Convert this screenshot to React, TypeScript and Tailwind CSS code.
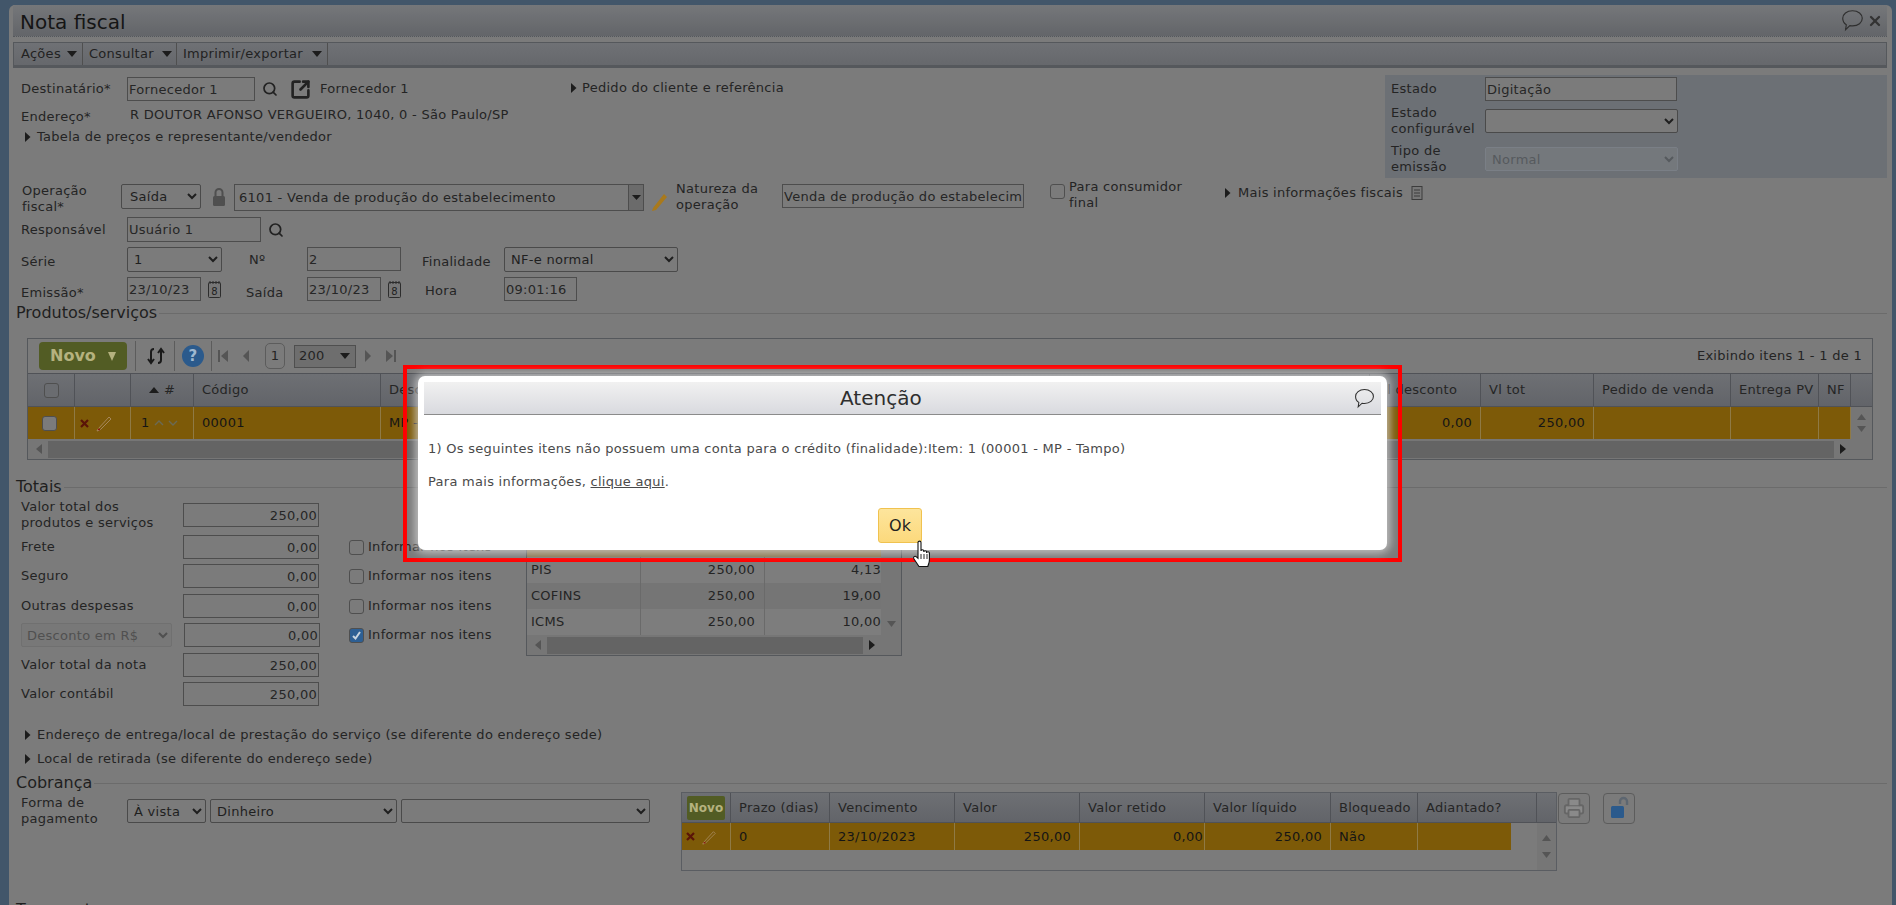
import { Printer, Search, SquareArrowOutUpRight, X } from "lucide-react";

const inputBase =
  "h-[24px] border border-[#4d4d4d] bg-[#7b7b7b] px-[1px] text-[13px] text-[#262626] outline-none";

function Triangle({ className = "" }: { className?: string }) {
  return (
    <svg width="6" height="10" viewBox="0 0 6 10" className={`shrink-0 ${className}`}>
      <path d="M0 0 L5.5 5 L0 10 Z" fill="#1c1c1c" />
    </svg>
  );
}

function Field({ value, className = "" }: { value: string; className?: string }) {
  return <input readOnly value={value} className={`${inputBase} shrink-0 ${className}`} />;
}

function Amount({ value, tone = "text-[#262626]" }: { value: string; tone?: string }) {
  return <input readOnly value={value} className={`${inputBase} w-[136px] shrink-0 text-right ${tone}`} />;
}

function Pick({ value, className = "" }: { value: string; className?: string }) {
  return (
    <select
      value={value}
      onChange={() => {}}
      className={`shrink-0 rounded-[2px] border border-[#4a4a4a] bg-[#7b7b7b] px-[2px] text-[13px] text-[#1f1f1f] outline-none ${className}`}
    >
      <option value={value}>{value}</option>
    </select>
  );
}

function Calendar() {
  return (
    <svg width="16" height="19" viewBox="0 0 16 19" className="shrink-0">
      <rect x="1.5" y="2.5" width="12" height="15" rx="1" fill="#777" stroke="#2d2d2d" />
      <path d="M3 1v3M6 1v3M9 1v3M12 1v3" stroke="#2d2d2d" />
      <text x="7.5" y="14.5" textAnchor="middle" fontSize="10" fill="#222" fontFamily="DejaVu Sans">
        8
      </text>
    </svg>
  );
}

function Magnifier() {
  return <Search size={16} strokeWidth={2.6} className="shrink-0 text-[#222]" />;
}

function Bubble({ size = 20 }: { size?: number }) {
  return (
    <svg width={size} height={size} viewBox="0 0 20 20" className="shrink-0">
      <path
        d="M10 1.5c5 0 8.5 2.9 8.5 6.6s-3.5 6.6-8.5 6.6c-.8 0-1.6-.1-2.3-.2L4 18l.6-4.3C2.600 12.500 1.500 10.500 1.500 8.100 1.500 4.400 5 1.500 10 1.500Z"
        fill="none"
        stroke="#2f2f2f"
        strokeWidth="1"
      />
    </svg>
  );
}

function RowTools({ small = false }: { small?: boolean }) {
  return (
    <span className="flex items-center gap-[6px]">
      <svg width="9" height="9" viewBox="0 0 9 9">
        <path d="M1 1 L8 8 M8 1 L1 8" stroke="#5a1408" strokeWidth="2.2" />
      </svg>
      <svg width={small ? 16 : 18} height="18" viewBox="0 0 18 18">
        <path d="M3 15 L14 3 L16 5 L5 16 L2 17 Z" fill="none" stroke="#a5875a" strokeWidth="1" />
        <path d="M3 15 L5 16" stroke="#8a1a10" strokeWidth="1.5" />
      </svg>
    </span>
  );
}

function HeadCell({ label, className = "" }: { label: string; className?: string }) {
  return (
    <div className={`flex h-full shrink-0 items-center border-r border-[#505257] px-[8px] whitespace-nowrap ${className}`}>
      {label}
    </div>
  );
}

function RowCell({ label = "", className = "", right = false }: { label?: string; className?: string; right?: boolean }) {
  return (
    <div
      className={`flex h-full shrink-0 items-center border-r border-[#8f7a45] px-[8px] whitespace-nowrap ${right ? "justify-end" : ""} ${className}`}
    >
      {label}
    </div>
  );
}

function Check({ checked = false, tone = "bg-[#7b7b7b]" }: { checked?: boolean; tone?: string }) {
  return (
    <span
      className={`flex h-[15px] w-[15px] shrink-0 items-center justify-center rounded-[3px] border border-[#4f4f4f] ${checked ? "bg-[#2d5f94]" : tone}`}
    >
      {checked && (
        <svg width="11" height="11" viewBox="0 0 11 11">
          <path d="M2 6l2.500 2.500L9 2" fill="none" stroke="#c8d4e0" strokeWidth="2" />
        </svg>
      )}
    </span>
  );
}

function Legend({ title, className = "" }: { title: string; className?: string }) {
  return (
    <div className={`flex h-[18px] items-center pl-[3px] ${className}`}>
      <span className="text-[16px] leading-[18px] tracking-normal text-[#1f1f1f]">{title}</span>
      <span className="ml-[2px] h-px flex-1 bg-[#6b6b6b]" />
    </div>
  );
}

function TotalRow({
  label,
  value,
  tone,
  mark,
  className = "",
}: {
  label: React.ReactNode;
  value: string;
  tone?: string;
  mark?: "on" | "off";
  className?: string;
}) {
  return (
    <div className={`flex h-[24px] items-center ${className}`}>
      <span className="w-[162px] shrink-0 leading-[16px]">{label}</span>
      <Amount value={value} tone={tone} />
      {mark && (
        <span className="ml-[30px] flex items-center gap-[4px] whitespace-nowrap">
          <Check checked={mark === "on"} />
          Informar nos itens
        </span>
      )}
    </div>
  );
}

function NovoButton() {
  return (
    <div className="flex h-[28px] w-[88px] items-center justify-between rounded-[4px] bg-[#525c24] px-[11px] text-[16px] font-bold tracking-normal text-[#b5b27f]">
      Novo
      <svg width="8" height="9" viewBox="0 0 8 9">
        <path d="M0 0 H8 L4 9 Z" fill="#b5b27f" />
      </svg>
    </div>
  );
}

function TaxRow({ name, base, value, tone }: { name: string; base: string; value: string; tone: string }) {
  return (
    <div className={`flex h-[26px] ${tone}`}>
      <div className="flex w-[114px] items-center border-r border-[#6a6a6a] px-[4px]">{name}</div>
      <div className="flex w-[124px] items-center justify-end border-r border-[#6a6a6a] px-[9px]">{base}</div>
      <div className="flex w-[116px] items-center justify-end">{value}</div>
    </div>
  );
}

function HandCursor() {
  return (
    <svg width="22" height="30" viewBox="0 0 22 30" className="absolute top-[171px] left-[505px]">
      <path
        d="M6 2.500c0-1.800 3-1.800 3 0V11c0-1.600 2.800-1.600 2.800 0v1c0-1.600 2.800-1.600 2.800 0v1c0-1.600 2.800-1.600 2.800 0v7c0 3-1 4-1.600 6.500H7L2 19c-1.400-2 .8-3.600 2.400-2.200L6 18.200Z"
        fill="#fff"
        stroke="#111"
        strokeWidth="1.1"
      />
      <path d="M9 14v5M12 14v5M15 14v5" stroke="#111" strokeWidth="0.9" />
    </svg>
  );
}

export default function App() {
  return (
    <div className="relative flex h-[905px] w-[1896px] overflow-hidden bg-[#42566a] pt-[5px] pr-[5px] pl-[9px] font-['DejaVu_Sans',sans-serif] text-[13px] leading-[18px] tracking-[0.28px] text-[#242424]">
      <div className="h-[1000px] flex-1 rounded-t-[6px] bg-[#7b7b7b] pr-[5px] pl-[4px]">
        <div className="flex h-[32px] items-center justify-between border-b border-dotted border-[#55585c] bg-linear-to-b from-[#75777a] to-[#636569] pr-[2px] pl-[7px]">
          <span className="pt-[3px] text-[20px] tracking-normal text-[#151515]">Nota fiscal</span>
          <span className="flex items-center gap-[3px] pr-[2px] text-[#333]">
            <Bubble size={23} />
            <X size={16} strokeWidth={3.4} />
          </span>
        </div>

        <div className="mt-[5px] flex h-[26px] items-stretch border-t border-r border-b-[3px] border-l border-[#55585c] border-b-[#55585c] bg-linear-to-b from-[#6f7175] to-[#66686c] text-[#222]">
          <div className="flex w-[69px] items-center justify-between border-r border-[#4f4f4f] pr-[5px] pl-[7px]">
            Ações
            <svg width="10" height="6" viewBox="0 0 10 6"><path d="M0 0H10L5 6Z" fill="#1c1c1c" /></svg>
          </div>
          <div className="flex w-[94px] items-center justify-between border-r border-[#4f4f4f] pr-[4px] pl-[6px]">
            Consultar
            <svg width="10" height="6" viewBox="0 0 10 6"><path d="M0 0H10L5 6Z" fill="#1c1c1c" /></svg>
          </div>
          <div className="flex w-[151px] items-center justify-between border-r border-[#4f4f4f] pr-[5px] pl-[6px]">
            Imprimir/exportar
            <svg width="10" height="6" viewBox="0 0 10 6"><path d="M0 0H10L5 6Z" fill="#1c1c1c" /></svg>
          </div>
        </div>

        <div className="flex h-[110px] pt-[7px]">
          <div className="w-[1372px] shrink-0 pt-[2px] pl-[8px]">
            <div className="flex h-[24px] items-center">
              <span className="w-[106px] shrink-0">Destinatário*</span>
              <Field value="Fornecedor 1" className="w-[128px]" />
              <span className="ml-[7px]"><Magnifier /></span>
              <SquareArrowOutUpRight size={21} strokeWidth={3} className="ml-[12px] text-[#222]" />
              <span className="ml-[9px] w-[251px] shrink-0">Fornecedor 1</span>
              <Triangle className="mb-[2px]" />
              <span className="mb-[3px] ml-[5px]">Pedido do cliente e referência</span>
            </div>
            <div className="mt-[6px] flex h-[16px] items-center">
              <span className="mt-[3px] w-[109px] shrink-0">Endereço*</span>
              <span>R DOUTOR AFONSO VERGUEIRO, 1040, 0 - São Paulo/SP</span>
            </div>
            <div className="mt-[6px] flex h-[16px] items-center pl-[4px]">
              <Triangle />
              <span className="ml-[6px]">Tabela de preços e representante/vendedor</span>
            </div>
          </div>
          <div className="h-[103px] flex-1 bg-[#6c7075] pt-[2px] pl-[6px]">
            <div className="flex h-[24px] items-center">
              <span className="w-[94px] shrink-0">Estado</span>
              <Field value="Digitação" className="w-[192px] text-[#33291f]" />
            </div>
            <div className="mt-[8px] flex h-[24px] items-center">
              <span className="w-[94px] shrink-0 leading-[16px]">Estado<br />configurável</span>
              <Pick value="" className="h-[24px] w-[193px]" />
            </div>
            <div className="mt-[14px] flex h-[24px] items-center">
              <span className="w-[94px] shrink-0 leading-[16px]">Tipo de<br />emissão</span>
              <select
                value="Normal"
                onChange={() => {}}
                className="h-[24px] w-[193px] rounded-[2px] border border-[#7a7f86] bg-[#74787c] px-[2px] text-[13px] text-[#565a5e] outline-none"
              >
                <option>Normal</option>
              </select>
            </div>
          </div>
        </div>

        <div className="mt-[6px] flex h-[27px] items-start pl-[9px]">
          <span className="mt-[-1px] w-[99px] shrink-0 leading-[16px]">Operação<br />fiscal*</span>
          <Pick value="Saída" className="h-[25px] w-[80px] border-[#3f4f3f] pl-[4px]" />
          <svg width="14" height="20" viewBox="0 0 14 20" className="mt-[3px] ml-[11px] shrink-0">
            <path d="M3.500 9V5.500a3.500 3.500 0 0 1 7 0V9" fill="none" stroke="#4f4f4f" strokeWidth="2" />
            <rect x="1" y="9" width="12" height="10" rx="1.500" fill="#4f4f4f" />
          </svg>
          <div className="ml-[8px] flex h-[27px] w-[410px] shrink-0 items-stretch border border-[#4d4d4d]">
            <span className="flex flex-1 items-center pl-[4px]">6101 - Venda de produção do estabelecimento</span>
            <span className="flex w-[15px] items-center justify-center border-l border-[#4d4d4d] bg-[#6b6b6b]">
              <svg width="9" height="5" viewBox="0 0 9 5"><path d="M0 0H9L4.500 5Z" fill="#1c1c1c" /></svg>
            </span>
          </div>
          <svg width="18" height="20" viewBox="0 0 18 20" className="mt-[7px] ml-[7px] shrink-0">
            <path d="M2 17 L13 3 L16 6 L5 19 L1 20 Z" fill="#a9791b" />
          </svg>
          <span className="mt-[-3px] ml-[7px] w-[106px] shrink-0 leading-[16px]">Natureza da<br />operação</span>
          <Field value="Venda de produção do estabelecimento" className="w-[242px]" />
          <span className="ml-[26px]"><Check /></span>
          <span className="mt-[-5px] ml-[4px] w-[155px] shrink-0 leading-[16px]">Para consumidor<br />final</span>
          <span className="flex items-center">
            <Triangle className="mx-[1px]" />
            <span className="ml-[6px] whitespace-nowrap">Mais informações fiscais</span>
            <svg width="12" height="14" viewBox="0 0 12 14" className="ml-[8px]">
              <rect x="1" y="0.5" width="10" height="13" fill="#777" stroke="#3c3c3c" />
              <path d="M3 4h6M3 7h6M3 10h6" stroke="#3c3c3c" />
            </svg>
          </span>
        </div>

        <div className="mt-[6px] flex h-[25px] items-center pl-[8px]">
          <span className="w-[106px] shrink-0">Responsável</span>
          <Field value="Usuário 1" className="h-[25px] w-[134px]" />
          <span className="ml-[7px]"><Magnifier /></span>
        </div>

        <div className="mt-[5px] flex h-[25px] items-start pl-[8px]">
          <span className="mt-[6px] w-[106px] shrink-0">Série</span>
          <Pick value="1" className="h-[25px] w-[95px]" />
          <span className="mt-[4px] ml-[27px] w-[58px] shrink-0">Nº</span>
          <Field value="2" className="w-[94px]" />
          <span className="mt-[6px] ml-[21px] w-[82px] shrink-0">Finalidade</span>
          <Pick value="NF-e normal" className="h-[25px] w-[174px]" />
        </div>

        <div className="mt-[5px] flex h-[24px] items-start pl-[8px]">
          <span className="mt-[7px] w-[106px] shrink-0">Emissão*</span>
          <Field value="23/10/23" className="w-[74px]" />
          <span className="mt-[3px] ml-[6px]"><Calendar /></span>
          <span className="mt-[7px] ml-[23px] w-[61px] shrink-0">Saída</span>
          <Field value="23/10/23" className="w-[74px]" />
          <span className="mt-[3px] ml-[6px]"><Calendar /></span>
          <span className="mt-[5px] ml-[22px] w-[79px] shrink-0">Hora</span>
          <Field value="09:01:16" className="w-[73px]" />
        </div>

        <Legend title="Produtos/serviços" className="mt-[3px]" />

        <div className="mt-[16px] mr-[14px] ml-[14px] flex h-[122px] flex-col border border-[#55585c]">
          <div className="flex h-[34px] items-center pl-[11px]">
            <NovoButton />
            <span className="ml-[8px] h-[30px] w-px bg-[#5c5c5c]" />
            <svg width="18" height="18" viewBox="0 0 18 18" className="ml-[11px]">
              <path d="M4 15V5c0-2 1-3 3-3M1 12l3 4 3-4M14 3v10c0 2-1 3-3 3M11 6l3-4 3 4" fill="none" stroke="#1a1a1a" strokeWidth="2" />
            </svg>
            <span className="ml-[9px] h-[30px] w-px bg-[#5c5c5c]" />
            <span className="ml-[7px] flex h-[22px] w-[22px] items-center justify-center rounded-full bg-[#2b5a8c] text-[15px] font-bold text-[#9fb8d0]">?</span>
            <span className="ml-[7px] h-[30px] w-px bg-[#5c5c5c]" />
            <span className="ml-[6px] flex items-center gap-[15px] text-[#4a4a4a]">
              <svg width="10" height="12" viewBox="0 0 10 12"><path d="M0 0h2v12H0zM10 0v12L3 6Z" fill="#555" /></svg>
              <svg width="6" height="12" viewBox="0 0 6 12"><path d="M6 0v12L0 6Z" fill="#555" /></svg>
            </span>
            <span className="ml-[16px] flex h-[26px] w-[20px] items-center justify-center rounded-[5px] border border-[#5c5c5c]">1</span>
            <span className="ml-[9px] flex h-[23px] w-[62px] items-center justify-between border border-[#4f4f4f] bg-[#6e6e6e] pr-[5px] pl-[4px]">
              200
              <svg width="10" height="6" viewBox="0 0 10 6"><path d="M0 0H10L5 6Z" fill="#1c1c1c" /></svg>
            </span>
            <span className="ml-[9px] flex items-center gap-[15px]">
              <svg width="6" height="12" viewBox="0 0 6 12"><path d="M0 0v12L6 6Z" fill="#555" /></svg>
              <svg width="10" height="12" viewBox="0 0 10 12"><path d="M8 0h2v12H8zM0 0v12L7 6Z" fill="#555" /></svg>
            </span>
            <span className="mr-[10px] ml-auto">Exibindo itens 1 - 1 de 1</span>
          </div>
          <div className="flex h-[34px] border-t border-b border-[#505257] bg-linear-to-b from-[#6e7074] to-[#626469] text-[#252525]">
            <div className="flex h-full w-[47px] shrink-0 items-center justify-center border-r border-[#505257]">
              <Check tone="bg-[#6a6c70]" />
            </div>
            <HeadCell label="" className="w-[56px]" />
            <div className="flex h-full w-[63px] shrink-0 items-center justify-center gap-[5px] border-r border-[#505257]">
              <svg width="10" height="6" viewBox="0 0 10 6"><path d="M0 6H10L5 0Z" fill="#1c1c1c" /></svg>
              #
            </div>
            <HeadCell label="Código" className="w-[187px]" />
            <HeadCell label="Descrição" className="w-[989px]" />
            <HeadCell label="Vl desconto" className="w-[111px]" />
            <HeadCell label="Vl tot" className="w-[113px]" />
            <HeadCell label="Pedido de venda" className="w-[137px]" />
            <HeadCell label="Entrega PV" className="w-[88px]" />
            <HeadCell label="NF" className="w-[32px]" />
          </div>
          <div className="flex h-[32px]">
            <div className="flex h-full flex-1 bg-[#7d5a08] text-[#151515]">
              <div className="flex h-full w-[47px] shrink-0 items-center justify-center border-r border-[#8f7a45] pr-[4px]">
                <Check tone="bg-[#7b7b7b]" />
              </div>
              <div className="flex h-full w-[56px] shrink-0 items-center border-r border-[#8f7a45] pl-[5px]"><RowTools /></div>
              <div className="flex h-full w-[63px] shrink-0 items-center gap-[4px] border-r border-[#8f7a45] pl-[10px]">
                1
                <svg width="24" height="8" viewBox="0 0 24 8"><path d="M1 6l4-4 4 4M15 2l4 4 4-4" fill="none" stroke="#6a6a55" strokeWidth="1.4" /></svg>
              </div>
              <RowCell label="00001" className="w-[187px]" />
              <RowCell label="MP - Tampo" className="w-[989px]" />
              <RowCell label="0,00" right className="w-[111px]" />
              <RowCell label="250,00" right className="w-[113px]" />
              <RowCell className="w-[137px]" />
              <RowCell className="w-[88px]" />
              <RowCell className="w-[32px]" />
            </div>
            <div className="flex w-[21px] shrink-0 flex-col items-center justify-center gap-[6px] bg-[#767676]">
              <svg width="9" height="6" viewBox="0 0 9 6"><path d="M0 6H9L4.500 0Z" fill="#555" /></svg>
              <svg width="9" height="6" viewBox="0 0 9 6"><path d="M0 0H9L4.500 6Z" fill="#555" /></svg>
            </div>
          </div>
          <div className="flex flex-1 items-center bg-[#767676] pr-[26px] pl-[8px]">
            <svg width="6" height="10" viewBox="0 0 6 10"><path d="M6 0v10L0 5Z" fill="#555" /></svg>
            <span className="ml-[6px] h-[17px] flex-1 bg-[#646464]" />
            <svg width="6" height="10" viewBox="0 0 6 10" className="ml-[6px]"><path d="M0 0v10L6 5Z" fill="#1c1c1c" /></svg>
          </div>
        </div>

        <Legend title="Totais" className="mt-[18px]" />

        <div className="flex pl-[8px]">
          <div className="w-[505px] shrink-0 pt-[7px]">
            <TotalRow label={<>Valor total dos<br />produtos e serviços</>} value="250,00" tone="text-[#3d4a26]" />
            <TotalRow label="Frete" value="0,00" mark="off" className="mt-[8px]" />
            <TotalRow label="Seguro" value="0,00" mark="off" className="mt-[5px]" />
            <TotalRow label="Outras despesas" value="0,00" mark="off" className="mt-[6px]" />
            <div className="mt-[5px] flex h-[24px] items-center">
              <select
                value="Desconto em R$"
                onChange={() => {}}
                className="h-[24px] w-[151px] shrink-0 rounded-[2px] border border-[#707070] bg-[#787878] px-[1px] text-[13px] text-[#505050] outline-none"
              >
                <option>Desconto em R$</option>
              </select>
              <span className="ml-[12px]"><Amount value="0,00" /></span>
              <span className="ml-[29px] flex items-center gap-[4px] whitespace-nowrap">
                <Check checked />
                Informar nos itens
              </span>
            </div>
            <TotalRow label="Valor total da nota" value="250,00" tone="text-[#3d4a26]" className="mt-[6px]" />
            <TotalRow label="Valor contábil" value="250,00" tone="text-[#3d4a26]" className="mt-[5px]" />
          </div>
          <div className="mt-[6px] h-[154px] w-[376px] shrink-0 border border-t-0 border-[#55585c]">
            <div className="h-[28px] bg-[#686a6e]" />
            <div className="h-[27px] w-[354px] bg-[#8a7850]" />
            <div className="flex h-[78px]">
              <div className="w-[354px]">
                <TaxRow name="PIS" base="250,00" value="4,13" tone="bg-[#7d7d7d]" />
                <TaxRow name="COFINS" base="250,00" value="19,00" tone="bg-[#757575]" />
                <TaxRow name="ICMS" base="250,00" value="10,00" tone="bg-[#7d7d7d]" />
              </div>
              <div className="flex flex-1 items-end justify-center bg-[#767676] pb-[8px]">
                <svg width="9" height="6" viewBox="0 0 9 6"><path d="M0 0H9L4.500 6Z" fill="#555" /></svg>
              </div>
            </div>
            <div className="flex h-[20px] items-center bg-[#767676] pr-[26px] pl-[8px]">
              <svg width="6" height="10" viewBox="0 0 6 10"><path d="M6 0v10L0 5Z" fill="#555" /></svg>
              <span className="ml-[6px] h-[17px] flex-1 bg-[#646464]" />
              <svg width="6" height="10" viewBox="0 0 6 10" className="ml-[6px]"><path d="M0 0v10L6 5Z" fill="#1c1c1c" /></svg>
            </div>
          </div>
        </div>

        <div className="mt-[21px] flex h-[16px] items-center gap-[6px] pl-[12px]">
          <Triangle />
          Endereço de entrega/local de prestação do serviço (se diferente do endereço sede)
        </div>
        <div className="mt-[8px] flex h-[16px] items-center gap-[6px] pl-[12px]">
          <Triangle />
          Local de retirada (se diferente do endereço sede)
        </div>

        <Legend title="Cobrança" className="mt-[7px]" />

        <div className="flex h-[80px] pl-[8px]">
          <div className="mt-[7px] flex h-[24px] w-[660px] shrink-0 items-center gap-[4px] self-start">
            <span className="w-[102px] shrink-0 leading-[16px]">Forma de<br />pagamento</span>
            <Pick value="À vista" className="h-[24px] w-[79px]" />
            <Pick value="Dinheiro" className="h-[24px] w-[187px]" />
            <Pick value="" className="h-[24px] w-[249px]" />
          </div>
          <div className="h-[79px] w-[876px] shrink-0 border border-[#5a5d62]">
            <div className="flex h-[30px] border-b border-[#505257] bg-linear-to-b from-[#6e7074] to-[#626469] text-[#252525]">
              <div className="flex h-full w-[49px] shrink-0 items-center justify-center border-r border-[#505257]">
                <span className="flex h-[24px] w-[38px] items-center justify-center rounded-[2px] bg-[#525c24] text-[12px] font-bold tracking-normal text-[#b5b27f]">Novo</span>
              </div>
              <HeadCell label="Prazo (dias)" className="w-[99px]" />
              <HeadCell label="Vencimento" className="w-[125px]" />
              <HeadCell label="Valor" className="w-[125px]" />
              <HeadCell label="Valor retido" className="w-[125px]" />
              <HeadCell label="Valor líquido" className="w-[126px]" />
              <HeadCell label="Bloqueado" className="w-[87px]" />
              <HeadCell label="Adiantado?" className="w-[119px]" />
            </div>
            <div className="flex h-[47px]">
              <div className="h-[27px] w-[829px] shrink-0">
                <div className="flex h-full bg-[#7d5a08] text-[#151515]">
                  <div className="flex h-full w-[49px] shrink-0 items-center border-r border-[#8f7a45] pl-[4px]"><RowTools small /></div>
                  <RowCell label="0" className="w-[99px]" />
                  <RowCell label="23/10/2023" className="w-[125px]" />
                  <RowCell label="250,00" right className="w-[125px]" />
                  <RowCell label="0,00" right className="w-[125px] pr-[1px]" />
                  <RowCell label="250,00" right className="w-[126px]" />
                  <RowCell label="Não" className="w-[87px]" />
                  <RowCell className="w-[93px] border-r-0" />
                </div>
              </div>
              <div className="ml-[26px] flex flex-1 flex-col items-center justify-around bg-[#767676] py-[6px]">
                <svg width="9" height="6" viewBox="0 0 9 6"><path d="M0 6H9L4.500 0Z" fill="#555" /></svg>
                <svg width="9" height="6" viewBox="0 0 9 6"><path d="M0 0H9L4.500 6Z" fill="#555" /></svg>
              </div>
            </div>
          </div>
          <div className="flex h-[32px] items-center self-start">
            <span className="ml-[1px] flex h-[31px] w-[32px] items-center justify-center rounded-[4px] border border-[#5c5c5c]">
              <Printer size={22} fill="#8a8a8a" className="text-[#666]" />
            </span>
            <span className="ml-[13px] flex h-[31px] w-[32px] items-center justify-center rounded-[4px] border border-[#5c5c5c]">
              <svg width="20" height="24" viewBox="0 0 20 24">
                <path d="M11 8V5.500a3.500 3.500 0 0 1 7 0V9" fill="none" stroke="#5d6670" strokeWidth="2.400" />
                <rect x="2" y="10" width="13" height="12" rx="1.500" fill="#2b5a8c" />
              </svg>
            </span>
          </div>
        </div>

        <Legend title="Transporte" className="mt-[29px]" />
      </div>

      <div className="absolute top-[365px] left-[403px] h-[197px] w-[999px] border-4 border-[#ff0000] pt-[7px] pl-[11px]">
        <div className="h-[174px] w-[969px] rounded-[7px] bg-white px-[6px] pt-[6px] text-[#4a4a4a] shadow-[0_0_9px_3px_rgba(215,215,215,0.75)]">
          <div className="flex h-[33px] items-center justify-between border-b border-[#8b8b8b] bg-linear-to-b from-[#f1f1f1] to-[#d9dadf] pr-[6px]">
            <span className="ml-[416px] text-[20px] tracking-normal text-[#2e2e2e]">Atenção</span>
            <Bubble size={21} />
          </div>
          <p className="mt-[25px] pl-[4px]">
            1) Os seguintes itens não possuem uma conta para o crédito (finalidade):Item: 1 (00001 - MP - Tampo)
          </p>
          <p className="mt-[15px] pl-[4px]">
            Para mais informações, <span className="underline">clique aqui</span>.
          </p>
          <div className="mt-[17px] pl-[454px]">
            <span className="flex h-[35px] w-[44px] items-center justify-center rounded-[3px] border border-[#f0c24f] bg-linear-to-b from-[#fde59c] to-[#fcd97c] text-[16px] tracking-normal text-[#222]">
              Ok
            </span>
          </div>
        </div>
        <HandCursor />
      </div>
    </div>
  );
}
